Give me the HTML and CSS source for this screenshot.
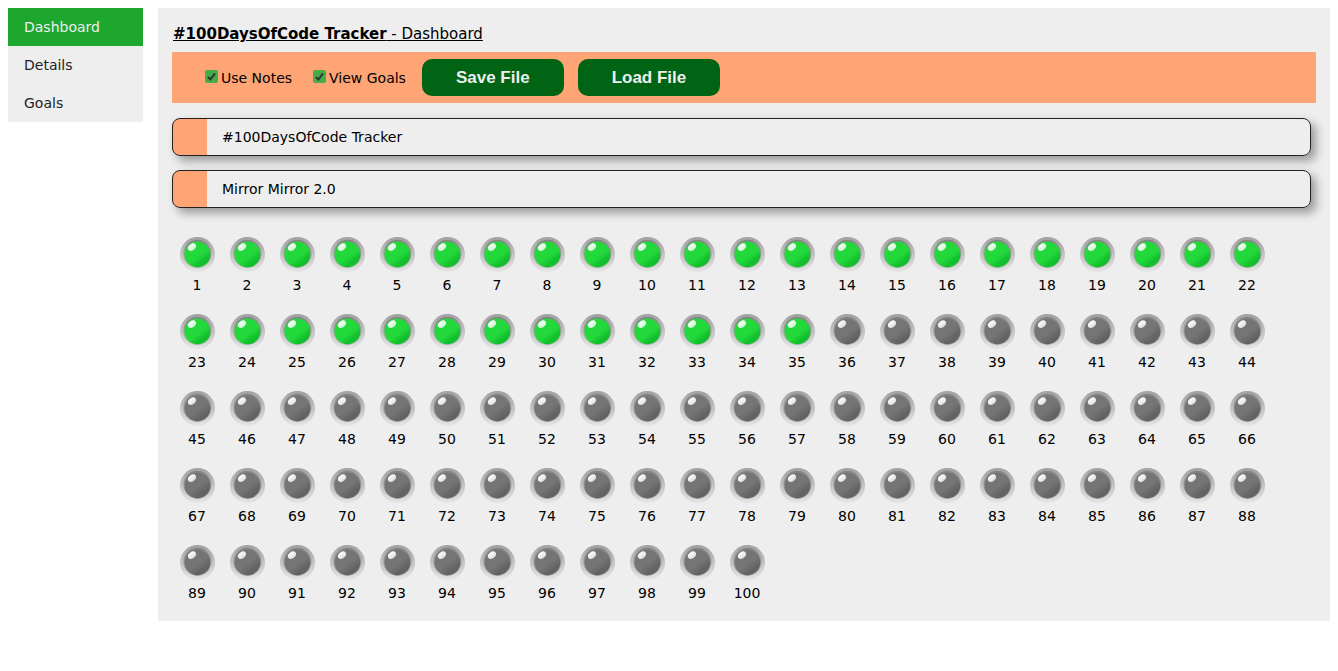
FILE: index.html
```html
<!DOCTYPE html>
<html lang="en">
<head>
<meta charset="utf-8">
<title>#100DaysOfCode Tracker</title>
<link rel="stylesheet" href="styles.css">
</head>
<body>
<svg class="defs" aria-hidden="true">
  <defs>
    <linearGradient id="rim" x1="0" y1="0" x2="0" y2="1">
      <stop offset="0" stop-color="#a0a0a0"/><stop offset="1" stop-color="#e6e6e6"/>
    </linearGradient>
    <linearGradient id="bezel" x1="0" y1="0" x2="0" y2="1">
      <stop offset="0" stop-color="#838383"/><stop offset="1" stop-color="#c2c2c2"/>
    </linearGradient>
    <linearGradient id="green" x1="0.2" y1="0.1" x2="0.8" y2="0.9">
      <stop offset="0.6" stop-color="#22d83a"/><stop offset="0.85" stop-color="#12bf2c"/>
    </linearGradient>
    <linearGradient id="gray" x1="0.2" y1="0.1" x2="0.8" y2="0.9">
      <stop offset="0.55" stop-color="#757575"/><stop offset="0.85" stop-color="#636363"/>
    </linearGradient>
    <linearGradient id="shine" x1="0" y1="0" x2="0" y2="1">
      <stop offset="0" stop-color="#fff"/><stop offset="1" stop-color="#fff" stop-opacity="0.75"/>
    </linearGradient>
    <g id="ring">
      <circle cx="17.5" cy="17.5" r="17.5" fill="url(#rim)"/>
      <circle cx="17.4" cy="17" r="14.2" fill="url(#bezel)"/>
    </g>
    <ellipse id="glint" cx="12" cy="10.2" rx="4.5" ry="3.1" transform="rotate(-38 12 10.2)" fill="url(#shine)"/>
    <symbol id="lamp-on" viewBox="0 0 35 35">
      <use href="#ring"/><circle cx="17.4" cy="17.4" r="13" fill="url(#green)"/><use href="#glint"/>
    </symbol>
    <symbol id="lamp-off" viewBox="0 0 35 35">
      <use href="#ring"/><circle cx="17.4" cy="17.4" r="13" fill="url(#gray)"/><use href="#glint"/>
    </symbol>
  </defs>
</svg>
<div class="layout">
  <nav class="menu">
    <a class="menu-link active" href="#dashboard">Dashboard</a>
    <a class="menu-link" href="#details">Details</a>
    <a class="menu-link" href="#goals">Goals</a>
  </nav>
  <main class="content">
    <h1 class="title"><strong>#100DaysOfCode Tracker</strong> - Dashboard</h1>
    <div class="toolbar">
      <label class="option"><input class="check" type="checkbox" checked>Use Notes</label>
      <label class="option"><input class="check" type="checkbox" checked>View Goals</label>
      <div class="actions">
        <button class="button" type="button">Save File</button>
        <button class="button" type="button">Load File</button>
      </div>
    </div>
    <section class="goals" id="goals">
      <div class="goal">#100DaysOfCode Tracker</div>
      <div class="goal">Mirror Mirror 2.0</div>
    </section>
    <section class="days" id="days"></section>
  </main>
</div>
<script src="days.js"></script>
</body>
</html>
```
FILE: styles.css
```css
* { box-sizing: border-box; }
body {
  margin: 8px;
  background: #fff;
  color: #000;
  font: 14px/19px Verdana, "DejaVu Sans", sans-serif;
}
.defs { position: absolute; width: 0; height: 0; }
.layout { display: flex; align-items: flex-start; gap: 15px; }
.menu { flex: 0 0 135px; background: #eee; }
.menu-link {
  display: block;
  padding: 9px 16px;
  color: #222;
  line-height: 20px;
  text-decoration: none;
}
.menu-link.active { background: #1da72e; color: #eee; }
.content { flex: 1; min-width: 0; padding: 16px 14px 7px; background: #eee; }
.title {
  margin: 0 0 8px 1px;
  font-size: 15px;
  line-height: 20px;
  font-weight: normal;
  text-decoration: underline;
}
.toolbar {
  display: flex;
  flex-wrap: wrap;
  align-items: center;
  padding: 7px 33px;
  background: #ffa474;
}
.option { display: flex; align-items: center; gap: 3px; margin-right: 21px; line-height: 20px; }
.option + .option { margin-right: 16px; }
.check {
  appearance: none;
  width: 13px;
  height: 13px;
  margin: 0 0 2px;
  border-radius: 2px;
  background: #45ad47 url("data:image/svg+xml,%3Csvg xmlns='http://www.w3.org/2000/svg' viewBox='0 0 13 13'%3E%3Cpath d='M3 7l2.4 2.5L10 3.3' fill='none' stroke='%23333' stroke-width='2'/%3E%3C/svg%3E");
}
.actions { display: flex; flex-wrap: wrap; gap: 14px; }
.button {
  padding: 9px 34px;
  border: 0;
  border-radius: 10px;
  background: #006414;
  color: #eee;
  font: bold 17px/19px Arial, "Liberation Sans", sans-serif;
}
.goals {
  display: grid;
  gap: 14px;
  margin: 15px 5px 21px 0;
}
.goal {
  padding: 9px 15px 8px 49px;
  border: 1px solid #222;
  border-radius: 8px;
  background: linear-gradient(to right, #ffa474 34px, #eee 34px);
  box-shadow: 5px 5px 10px #999;
}
.days {
  display: grid;
  grid-template-columns: repeat(auto-fill, 50px);
}
.day {
  display: flex;
  flex-direction: column;
  align-items: center;
  gap: 4px;
  height: 77px;
  padding-top: 8px;
}
.lamp { display: block; width: 35px; height: 35px; }
```
FILE: days.js
```js
const completed = 35;
const days = document.getElementById("days");
for (let n = 1; n <= 100; n++) {
  const state = n <= completed ? "on" : "off";
  days.insertAdjacentHTML("beforeend",
    `<div class="day"><svg class="lamp" aria-hidden="true"><use href="#lamp-${state}"/></svg><span>${n}</span></div>`);
}
```
